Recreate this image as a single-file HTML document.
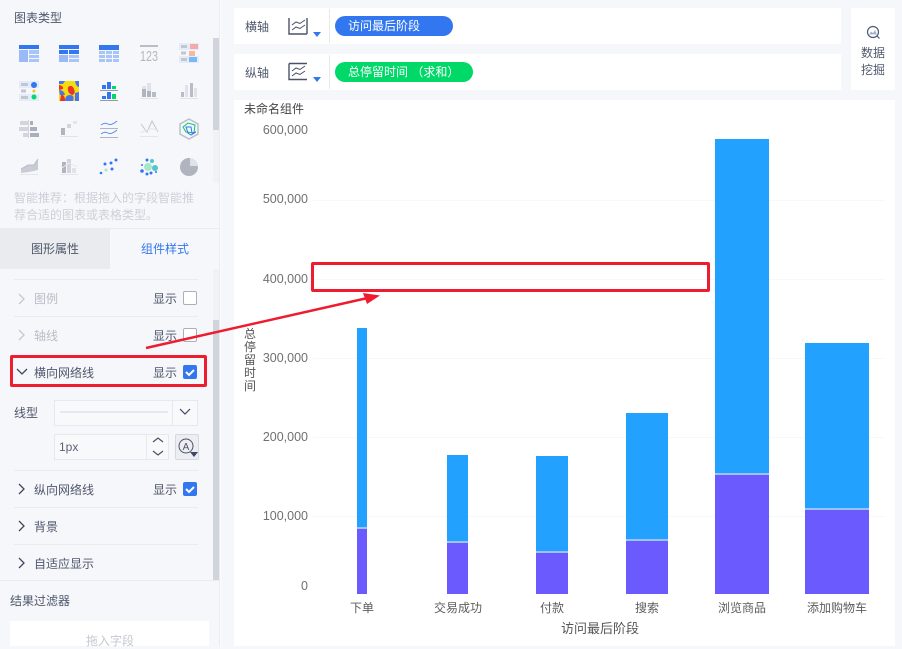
<!DOCTYPE html>
<html><head><meta charset="utf-8"><style>
*{box-sizing:border-box}
html,body{margin:0;padding:0}
body{width:902px;height:646px;overflow:hidden;position:relative;background:#f6f7fa;font-family:"Liberation Sans","Noto Sans CJK SC",sans-serif;font-size:12px;color:#4f576c}
.a{position:absolute;white-space:nowrap;line-height:16px}
.w{position:absolute;background:#fff}
.cb{position:absolute;left:183px;width:14px;height:14px;border:1px solid #a9afbd;border-radius:2px;background:#fff}
.cb.on{background:#3377f0;border-color:#3377f0}
.hl{position:absolute;left:14px;width:184px;height:1px;background:#e9ebef}
.gl{position:absolute;left:313px;width:572px;height:1px;background:#f8f8f9}
.yl{position:absolute;width:70px;left:238px;text-align:right;color:#707070;line-height:14px;font-size:12.5px}
.xl{position:absolute;top:600px;width:90px;text-align:center;color:#5c5c5c;line-height:16px}
.b1,.b2{position:absolute}
.b1{background:#22a1ff}.b2{background:#6b5bff;border-top:2px solid #9dc3ff}
</style></head><body>
<div style="position:absolute;left:219px;top:0;width:1px;height:646px;background:#e9ebef"></div>
<div style="position:absolute;left:220px;top:0;width:1px;height:646px;background:#fcfcfd"></div>
<div class="a" style="left:14px;top:10px">图表类型</div>

<svg style="position:absolute;left:0;top:30px" width="213" height="160" viewBox="0 30 213 160">
<g fill="#3377f0"><rect x="19" y="45" width="20" height="4"/><rect x="59" y="45" width="20" height="4"/><rect x="99" y="45" width="20" height="5"/><rect x="59" y="50" width="9" height="4"/><rect x="69" y="50" width="10" height="4"/></g>
<g fill="#a8c4f8"><rect x="19" y="50" width="9" height="12" fill="#9bb9f6"/><rect x="29" y="50" width="10" height="4"/><rect x="29" y="55" width="10" height="3"/><rect x="29" y="59" width="10" height="3"/><rect x="59" y="55" width="9" height="7" fill="#9bb9f6"/><rect x="69" y="55" width="10" height="3"/><rect x="69" y="59" width="10" height="3"/>
<rect x="99" y="51" width="6" height="3"/><rect x="106" y="51" width="6" height="3"/><rect x="113" y="51" width="6" height="3"/><rect x="99" y="55" width="6" height="3"/><rect x="106" y="55" width="6" height="3"/><rect x="113" y="55" width="6" height="3"/><rect x="99" y="59" width="6" height="3"/><rect x="106" y="59" width="6" height="3"/><rect x="113" y="59" width="6" height="3"/></g>
<rect x="140" y="45" width="18" height="2" fill="#b9bdc6"/>
<text x="140" y="61" font-size="15" fill="#b4b8c2" font-family="Liberation Sans" textLength="18" lengthAdjust="spacingAndGlyphs">123</text>
<rect x="179" y="43" width="20" height="7" fill="#e3ecfc"/><rect x="179" y="56" width="20" height="7" fill="#e3ecfc"/><rect x="181" y="45" width="6" height="3" fill="#c4c6cc"/><rect x="181" y="51.500" width="5" height="3" fill="#c4c6cc"/><rect x="181" y="58" width="6" height="3" fill="#c4c6cc"/>
<rect x="190" y="44" width="8" height="5" fill="#f6a9a9"/><rect x="189" y="51" width="6" height="5" fill="#f6b9a0"/><rect x="189" y="57" width="8" height="5" fill="#7ab8f5"/>

<rect x="19" y="81" width="20" height="7" fill="#e3ecfc"/><rect x="19" y="94" width="20" height="7" fill="#e3ecfc"/><rect x="21" y="83" width="7" height="3" fill="#c4c6cc"/><rect x="21" y="89.500" width="5" height="3" fill="#c4c6cc"/><rect x="21" y="96" width="7" height="3" fill="#c4c6cc"/><circle cx="34" cy="85" r="3" fill="#3377f0"/><circle cx="34" cy="91" r="1.5" fill="#f5c518"/><circle cx="34" cy="97" r="2.500" fill="#00d968"/>
<rect x="59" y="81" width="20" height="20" fill="#f5dc10"/><path d="M59 85q5 1 4 4l-4 1zM68 87q4-3 6 2t-2 6q-5-2-4-8zM61 95q4-1 4 6h-5z" fill="#e8352a"/><path d="M59 81h6l-2 3-4 0zM75 81h4v6q-3 0-4-6zM59 90q5 0 6 5l-5 0zM65 101q0-6 5-6t3 6zM75 93l4-1v9h-4z" fill="#4a74e8"/>
<g fill="#3377f0"><rect x="102" y="85" width="4" height="4"/><rect x="107" y="82" width="4" height="7"/><rect x="102" y="96" width="4" height="3"/><rect x="107" y="92" width="4" height="7"/></g><g fill="#00d968"><rect x="112" y="86" width="4" height="3"/><rect x="112" y="94" width="4" height="5"/></g><rect x="100" y="90" width="18" height="1" fill="#99a"/><rect x="100" y="100" width="18" height="1" fill="#99a"/>
<rect x="142" y="86" width="4" height="3" fill="#dfe2e7"/><rect x="142" y="89" width="4" height="8" fill="#b0b4bf"/><rect x="147" y="83" width="4" height="8" fill="#dfe2e7"/><rect x="147" y="91" width="4" height="6" fill="#b0b4bf"/><rect x="152" y="92" width="4" height="5" fill="#b8bcc6"/><rect x="140" y="98" width="18" height="1" fill="#e0e3e8"/>
<rect x="181" y="92" width="3" height="5" fill="#b8bcc6"/><rect x="185" y="85" width="3" height="12" fill="#dfe2e7"/><rect x="190" y="83" width="3" height="14" fill="#b8bcc6"/><rect x="194" y="88" width="3" height="9" fill="#dfe2e7"/><rect x="180" y="98" width="18" height="1" fill="#e0e3e8"/>

<g fill="#d2d5dc"><rect x="20" y="121" width="8" height="4"/><rect x="19" y="127" width="9" height="4"/><rect x="23" y="133" width="5" height="4"/></g><rect x="28" y="120" width="1" height="18" fill="#d2d5dc"/><g fill="#aab0bb"><rect x="30" y="121" width="3" height="4"/><rect x="30" y="127" width="7" height="4"/><rect x="30" y="133" width="9" height="4"/></g>
<rect x="61" y="128" width="4" height="7" fill="#b0b4bf"/><rect x="67" y="124" width="4" height="4" fill="#d2d5dc"/><rect x="73" y="121" width="4" height="3" fill="#e3e5ea"/><rect x="60" y="136" width="18" height="1" fill="#e0e3e8"/>
<g fill="none" stroke="#5b8fe8"><path d="M101 125q4-3 7-1t9-3"/><path d="M101 134q4-3 7-1t9-3"/></g><rect x="100" y="128" width="18" height="1" fill="#b0b4bf"/><rect x="100" y="137" width="18" height="1" fill="#b0b4bf"/>
<path d="M141 124l6 8 5-11 6 11" fill="none" stroke="#c2c6cf"/><path d="M141 132.500l11-4 6 2" fill="none" stroke="#e3e5ea"/><rect x="140" y="136" width="18" height="1" fill="#e3e5ea"/>
<path d="M189 119l9 5v10l-9 5-9-5v-10z" fill="none" stroke="#bcc0c9" stroke-width="1.5"/><path d="M183 127l5-4 7 2-1 8-8-1z" fill="none" stroke="#00c96a"/><path d="M186 127h5l1 6 4-1-5 3-3-2z" fill="none" stroke="#3377f0"/>

<path d="M21 169l7-4 6 0 4-6v11l-9 2-8 1z" fill="#c8ccd4"/><path d="M21 169l7-4 6 0 4-6" fill="none" stroke="#b8bcc6"/><rect x="20" y="174" width="18" height="1" fill="#e3e5ea"/>
<rect x="62" y="162" width="4" height="11" fill="#b0b4bf"/><rect x="67" y="159" width="4" height="14" fill="#d2d5dc"/><rect x="72" y="168" width="4" height="5" fill="#dfe2e7"/><path d="M62 168l7-5 6 3h3" fill="none" stroke="#e8eaee"/><rect x="60" y="174" width="18" height="1" fill="#e3e5ea"/>
<g fill="#3377f0"><circle cx="101" cy="173" r="1.300"/><circle cx="105" cy="164" r="1.500"/><circle cx="111" cy="163" r="1.500"/><circle cx="116" cy="160" r="1.500"/><circle cx="112" cy="169" r="1.500"/></g><circle cx="106" cy="170" r="1.500" fill="#a8e6c8"/>
<circle cx="148" cy="167" r="4" fill="#a8e6c8"/><circle cx="152" cy="161" r="2" fill="#4fc6d0"/><circle cx="155" cy="168" r="3" fill="#4fc6d0"/><g fill="#3377f0"><circle cx="147" cy="160" r="1.500"/><circle cx="142" cy="165" r="1"/><circle cx="142" cy="171" r="1.800"/><circle cx="147" cy="174" r="1.500"/><circle cx="151" cy="173" r="1.500"/><circle cx="156" cy="172" r="1"/></g>
<circle cx="189" cy="167" r="9" fill="#b0b4bf"/><path d="M190 158a9 9 0 0 1 8 8h-8z" fill="#dfe2e7"/>
</svg>
<div style="position:absolute;left:213px;top:38px;width:6px;height:145px;background:#f1f2f5"></div>
<div style="position:absolute;left:213px;top:38px;width:6px;height:92px;background:#d0d4dc"></div>

<div class="a" style="left:14px;top:190px;color:#ccd0d8">智能推荐：根据拖入的字段智能推</div>
<div class="a" style="left:14px;top:207px;color:#ccd0d8">荐合适的图表或表格类型。</div>

<div style="position:absolute;left:0;top:228px;width:219px;height:1px;background:#e9ebef"></div>
<div style="position:absolute;left:0;top:229px;width:110px;height:40px;background:#e9ebef"></div>
<div class="a" style="left:31px;top:241px">图形属性</div>
<div class="a" style="left:141px;top:241px;color:#3377f0">组件样式</div>
<div style="position:absolute;left:213px;top:269px;width:6px;height:311px;background:#f1f2f5"></div>
<div style="position:absolute;left:213px;top:320px;width:6px;height:260px;background:#d0d4dc"></div>

<div class="hl" style="top:279px"></div>
<div class="hl" style="top:316px"></div>
<div class="hl" style="top:470px"></div>
<div class="hl" style="top:507px"></div>
<div class="hl" style="top:544px"></div>

<svg style="position:absolute;left:0;top:280px" width="40" height="300" viewBox="0 280 40 300" fill="none" stroke-width="1.3">
<path d="M19 294l5 5-5 5M19 330l5 5-5 5" stroke="#c5c9d1"/>
<path d="M17 369l5 5 5-5" stroke="#3f4860"/>
<path d="M19 484l5 5-5 5M19 521l5 5-5 5M19 558l5 5-5 5" stroke="#3f4860"/>
</svg>

<div class="a" style="left:34px;top:291px;color:#b9bdc7">图例</div>
<div class="a" style="left:153px;top:291px">显示</div><div class="cb" style="top:291px"></div>
<div class="a" style="left:34px;top:328px;color:#b9bdc7">轴线</div>
<div class="a" style="left:153px;top:328px">显示</div><div class="cb" style="top:328px"></div>
<div class="a" style="left:34px;top:365px">横向网络线</div>
<div class="a" style="left:153px;top:365px">显示</div><div class="cb on" style="top:365px"></div>
<div class="a" style="left:34px;top:482px">纵向网络线</div>
<div class="a" style="left:153px;top:482px">显示</div><div class="cb on" style="top:482px"></div>
<div class="a" style="left:34px;top:519px">背景</div>
<div class="a" style="left:34px;top:556px">自适应显示</div>
<svg style="position:absolute;left:183px;top:365px" width="14" height="14" fill="none" stroke="#fff" stroke-width="2"><path d="M3 7l3 3 5-5"/></svg>
<svg style="position:absolute;left:183px;top:482px" width="14" height="14" fill="none" stroke="#fff" stroke-width="2"><path d="M3 7l3 3 5-5"/></svg>

<div class="a" style="left:14px;top:405px">线型</div>
<div style="position:absolute;left:54px;top:400px;width:144px;height:26px;border:1px solid #e6e8ed;background:#f8f9fb"></div>
<div style="position:absolute;left:60px;top:411px;width:108px;height:2px;background:#e6e8ed"></div>
<div style="position:absolute;left:172px;top:400px;width:1px;height:26px;background:#e6e8ed"></div>
<svg style="position:absolute;left:178px;top:407px" width="14" height="10" fill="none" stroke="#3f4860" stroke-width="1.2"><path d="M2 2l5 5 5-5"/></svg>
<div style="position:absolute;left:54px;top:434px;width:115px;height:26px;border:1px solid #e6e8ed;background:#f8f9fb"></div>
<div class="a" style="left:59px;top:439px;color:#5a6274">1px</div>
<div style="position:absolute;left:146px;top:434px;width:1px;height:26px;background:#e6e8ed"></div>
<svg style="position:absolute;left:150px;top:436px" width="16" height="22" fill="none" stroke="#4a5268" stroke-width="1.2"><path d="M3 6l5-4 5 4M3 15l5 4 5-4"/></svg>
<div style="position:absolute;left:175px;top:434px;width:24px;height:26px;border:1px solid #d5d8df;border-radius:2px;background:#eceef1"></div>
<svg style="position:absolute;left:175px;top:434px" width="24" height="26"><circle cx="11" cy="12" r="7" fill="none" stroke="#4a5268"/><text x="11" y="16" text-anchor="middle" font-size="10" fill="#4a5268" font-family="Liberation Sans">A</text><path d="M15 18h8l-4 5z" fill="#3f4860"/></svg>

<div style="position:absolute;left:0;top:580px;width:219px;height:1px;background:#e9ebef"></div>
<div class="a" style="left:10px;top:593px">结果过滤器</div>
<div class="w" style="left:10px;top:621px;width:199px;height:25px"></div>
<div class="a" style="left:86px;top:633px;color:#c5c9d1">拖入字段</div>

<div class="w" style="left:234px;top:8px;width:607px;height:36px"></div>
<div class="w" style="left:234px;top:54px;width:607px;height:36px"></div>
<div class="w" style="left:851px;top:8px;width:44px;height:82px"></div>
<div style="position:absolute;left:329px;top:9px;width:1px;height:34px;background:#e6e8ed"></div>
<div style="position:absolute;left:329px;top:55px;width:1px;height:34px;background:#e6e8ed"></div>
<div class="a" style="left:245px;top:19px">横轴</div>
<div class="a" style="left:245px;top:65px">纵轴</div>
<svg style="position:absolute;left:285px;top:14px" width="40" height="76" fill="none" stroke="#4a5268" stroke-width="1.4">
<path d="M4 4v16h18M22 4v16"/><path d="M7 11l4-3 4 1.500 5-3.500M7 16l4-3 4 1.500 5-3.500" stroke-width="1"/>
<path d="M28 18h8l-4 5z" fill="#3377f0" stroke="none"/>
<path d="M4 49.500v16h18M4 49.500h18"/><path d="M7 57l4-3 4 1.500 5-3.500M7 62l4-3 4 1.500 5-3.500" stroke-width="1"/>
<path d="M28 63h8l-4 5z" fill="#3377f0" stroke="none"/>
</svg>
<div style="position:absolute;left:335px;top:16px;width:118px;height:20px;border-radius:10px;background:#3377f0"></div>
<div class="a" style="left:348px;top:18px;color:#fff">访问最后阶段</div>
<div style="position:absolute;left:335px;top:62px;width:138px;height:20px;border-radius:10px;background:#00d968"></div>
<div class="a" style="left:348px;top:64px;color:#fff">总停留时间 （求和）</div>
<svg style="position:absolute;left:866px;top:25px" width="15" height="15" fill="none" stroke="#4a5a78" stroke-width="1.2"><circle cx="7" cy="7" r="5.500"/><path d="M11 11l2.500 2.500"/><path d="M3 9.500l2-3 2 1.500 2-3 2 4.500z" fill="#a9b2c4" stroke="none"/></svg>
<div class="a" style="left:861px;top:45px">数据</div>
<div class="a" style="left:861px;top:62px">挖掘</div>

<div class="w" style="left:234px;top:100px;width:661px;height:546px"></div>
<div class="a" style="left:244px;top:101px;color:#444">未命名组件</div>

<div class="gl" style="top:200px"></div>
<div class="gl" style="top:279px"></div>
<div class="gl" style="top:358px"></div>
<div class="gl" style="top:437px"></div>
<div class="gl" style="top:516px"></div>

<div class="yl" style="top:123px">600,000</div>
<div class="yl" style="top:192px">500,000</div>
<div class="yl" style="top:272px">400,000</div>
<div class="yl" style="top:351px">300,000</div>
<div class="yl" style="top:430px">200,000</div>
<div class="yl" style="top:509px">100,000</div>
<div class="yl" style="top:579px">0</div>

<div class="a" style="left:243px;top:328px;width:14px;line-height:13px;white-space:normal;color:#555;text-align:center">总停留时间</div>

<div class="b1" style="left:357px;top:328px;width:10px;height:200px"></div><div class="b2" style="left:357px;top:527px;width:10px;height:67px"></div>
<div class="b1" style="left:447px;top:455px;width:21px;height:87px"></div><div class="b2" style="left:447px;top:541px;width:21px;height:53px"></div>
<div class="b1" style="left:536px;top:456px;width:32px;height:96px"></div><div class="b2" style="left:536px;top:551px;width:32px;height:43px"></div>
<div class="b1" style="left:626px;top:413px;width:42px;height:127px"></div><div class="b2" style="left:626px;top:539px;width:42px;height:55px"></div>
<div class="b1" style="left:715px;top:139px;width:54px;height:335px"></div><div class="b2" style="left:715px;top:473px;width:54px;height:121px"></div>
<div class="b1" style="left:805px;top:343px;width:64px;height:166px"></div><div class="b2" style="left:805px;top:508px;width:64px;height:86px"></div>

<div class="xl" style="left:317px">下单</div>
<div class="xl" style="left:413px">交易成功</div>
<div class="xl" style="left:507px">付款</div>
<div class="xl" style="left:602px">搜索</div>
<div class="xl" style="left:697px">浏览商品</div>
<div class="xl" style="left:792px">添加购物车</div>
<div class="a" style="left:561px;top:621px;color:#555;font-size:13px">访问最后阶段</div>

<div style="position:absolute;left:10px;top:355px;width:197px;height:32px;border:3px solid #ee1c2e;border-radius:2px"></div>
<div style="position:absolute;left:311px;top:262px;width:399px;height:30px;border:3px solid #ee1c2e;border-radius:2px"></div>
<svg style="position:absolute;left:140px;top:285px" width="250" height="70" fill="none"><path d="M6 63L232 12" stroke="#ee1c2e" stroke-width="2.500"/><path d="M240 10.500L223 8l4 11z" fill="#ee1c2e"/></svg>
</body></html>
